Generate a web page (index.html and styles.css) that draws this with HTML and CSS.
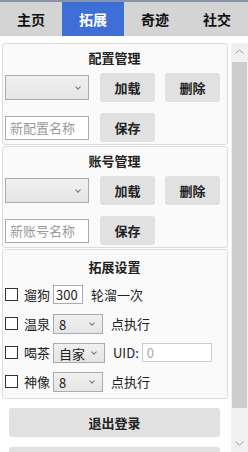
FILE: index.html
```html
<!DOCTYPE html>
<html>
<head>
    <meta charset="utf-8">
    <title>拓展</title>
    <link rel="stylesheet" href="styles.css">
</head>
<body>
<div class="tabs">
    <div class="tab">主页</div>
    <div class="tab active">拓展</div>
    <div class="tab">奇迹</div>
    <div class="tab">社交</div>
</div>
<div class="main">
    <div class="content">
        <!-- config -->
        <div class="panel">
            <div class="panel-title">配置管理</div>
            <div class="row">
                <div class="select wide"><select><option></option></select></div>
                <button class="btn">加载</button>
                <button class="btn">删除</button>
            </div>
            <div class="row">
                <input class="name" type="text" placeholder="新配置名称">
                <button class="btn">保存</button>
            </div>
        </div>
        <!-- account -->
        <div class="panel">
            <div class="panel-title">账号管理</div>
            <div class="row">
                <div class="select wide"><select><option></option></select></div>
                <button class="btn">加载</button>
                <button class="btn">删除</button>
            </div>
            <div class="row">
                <input class="name" type="text" placeholder="新账号名称">
                <button class="btn">保存</button>
            </div>
        </div>
        <!-- settings -->
        <div class="panel settings">
            <div class="panel-title">拓展设置</div>
            <div class="opt">
                <input class="chk" type="checkbox">
                <span class="lbl">遛狗</span>
                <input class="num" type="text" value="300">
                <span class="after">轮溜一次</span>
            </div>
            <div class="opt">
                <input class="chk" type="checkbox">
                <span class="lbl">温泉</span>
                <div class="select small"><select><option>8</option></select></div>
                <span class="after">点执行</span>
            </div>
            <div class="opt">
                <input class="chk" type="checkbox">
                <span class="lbl">喝茶</span>
                <div class="select mid"><select><option>自家</option></select></div>
                <span class="after">UID:</span>
                <input class="uid" type="text" placeholder="0">
            </div>
            <div class="opt">
                <input class="chk" type="checkbox">
                <span class="lbl">神像</span>
                <div class="select small"><select><option>8</option></select></div>
                <span class="after">点执行</span>
            </div>
        </div>
        <button class="btn block">退出登录</button>
        <button class="btn block"></button>
    </div>
    <div class="scrollbar">
        <div class="sb-btn">
            <svg width="9" height="5" viewBox="0 0 9 5"><path d="M0.5 4.5 L4.5 0.8 L8.5 4.5" fill="none" stroke="#a3a3a3" stroke-width="1"/></svg>
        </div>
        <div class="sb-thumb"></div>
        <div class="sb-space"></div>
        <div class="sb-btn">
            <svg width="9" height="5" viewBox="0 0 9 5"><path d="M0.5 0.5 L4.5 4.2 L8.5 0.5" fill="none" stroke="#a3a3a3" stroke-width="1"/></svg>
        </div>
    </div>
</div>
</body>
</html>
```

FILE: styles.css
```css
* {
    box-sizing: border-box;
}

body {
    margin: 0;
    width: 248px;
    height: 452px;
    overflow: hidden;
    background-color: #fff;
    font-family: "Noto Sans CJK SC", "Noto Sans", sans-serif;
    font-size: 13px;
    color: #222;
}

.tabs {
    display: flex;
    height: 36px;
    border-top: 2px solid #8795ab;
    background-color: #d4d4d4;
}

.tab {
    flex: 1;
    text-align: center;
    line-height: 34px;
    font-weight: bold;
    font-size: 14px;
    color: #111;
}

.tab.active {
    background-color: #3d6fd6;
    color: #fff;
}

.main {
    display: flex;
    height: 416px;
    padding-top: 7px;
    overflow: hidden;
}

.content {
    width: 231px;
    padding: 0 3px 0 2px;
}

.panel {
    background-color: #fafafa;
    border: 1px solid #dcdcdc;
    border-radius: 3px;
    padding: 5px 2px 2px 1px;
    margin-bottom: 1px;
}

.panel-title {
    text-align: center;
    font-weight: bold;
    line-height: 18px;
    margin-bottom: 6px;
}

.row {
    display: flex;
    align-items: center;
    height: 29px;
}

.row + .row {
    margin-top: 11px;
}

.select {
    position: relative;
    height: 20px;
}

.select select {
    appearance: none;
    -webkit-appearance: none;
    width: 100%;
    height: 100%;
    margin: 0;
    border: 1px solid #ababab;
    border-radius: 0;
    background: linear-gradient(#f0f0f0, #e5e5e5);
    font-family: inherit;
    font-size: 13px;
    color: #222;
    padding: 0 0 0 5px;
    outline: none;
}

.select::after {
    content: "";
    position: absolute;
    top: 50%;
    right: 9px;
    width: 3px;
    height: 3px;
    margin-top: -3px;
    border-right: 1px solid #777;
    border-bottom: 1px solid #777;
    transform: rotate(45deg);
}

.select.wide {
    width: 84px;
    height: 25px;
    margin-left: 1px;
}

.select.small {
    width: 50px;
}

.select.mid {
    width: 52px;
}

.btn {
    width: 55px;
    height: 29px;
    border: none;
    border-radius: 3px;
    background-color: #e1e1e1;
    font-family: inherit;
    font-size: 13px;
    font-weight: bold;
    color: #222;
    padding: 0;
    margin-left: 11px;
}

.btn + .btn {
    margin-left: 10px;
}

.name {
    width: 84px;
    height: 24px;
    margin: 0 0 0 1px;
    border: 1px solid #ababab;
    background-color: #fff;
    font-family: inherit;
    font-size: 13px;
    padding: 0 4px;
    outline: none;
}

.name::placeholder {
    color: #9a9a9a;
}

.settings {
    margin-top: 1px;
    padding-top: 8px;
}

.settings .panel-title {
    margin-bottom: 4px;
}

.opt {
    display: flex;
    align-items: center;
    height: 29px;
}

.chk {
    appearance: none;
    -webkit-appearance: none;
    width: 13px;
    height: 13px;
    margin: 0 6px 0 1px;
    border: 1px solid #333;
    background-color: #fff;
}

.lbl {
    width: 26px;
    margin-right: 3px;
    white-space: nowrap;
}

.num {
    width: 30px;
    height: 19px;
    margin: 0;
    border: 1px solid #ababab;
    padding: 0 2px;
    font-family: inherit;
    font-size: 13px;
    color: #222;
    outline: none;
}

.after {
    margin-left: 8px;
    white-space: nowrap;
}

.uid {
    width: 70px;
    height: 19px;
    margin: 0 0 0 3px;
    border: 1px solid #cfcfcf;
    background-color: #fff;
    padding: 0 4px;
    font-family: inherit;
    font-size: 13px;
    outline: none;
}

.uid::placeholder {
    color: #aaa;
}

.btn.block {
    display: block;
    width: 211px;
    margin: 9px 0 0 7px;
}

.btn.block + .btn.block {
    margin-top: 10px;
}

.scrollbar {
    display: flex;
    flex-direction: column;
    width: 17px;
    background-color: #f0f0f0;
}

.sb-btn {
    display: flex;
    align-items: center;
    justify-content: center;
    height: 17px;
}

.sb-thumb {
    height: 346px;
    margin: 2px 1px 0;
    background-color: #cdcdcd;
}

.sb-space {
    flex: 1;
}
```
